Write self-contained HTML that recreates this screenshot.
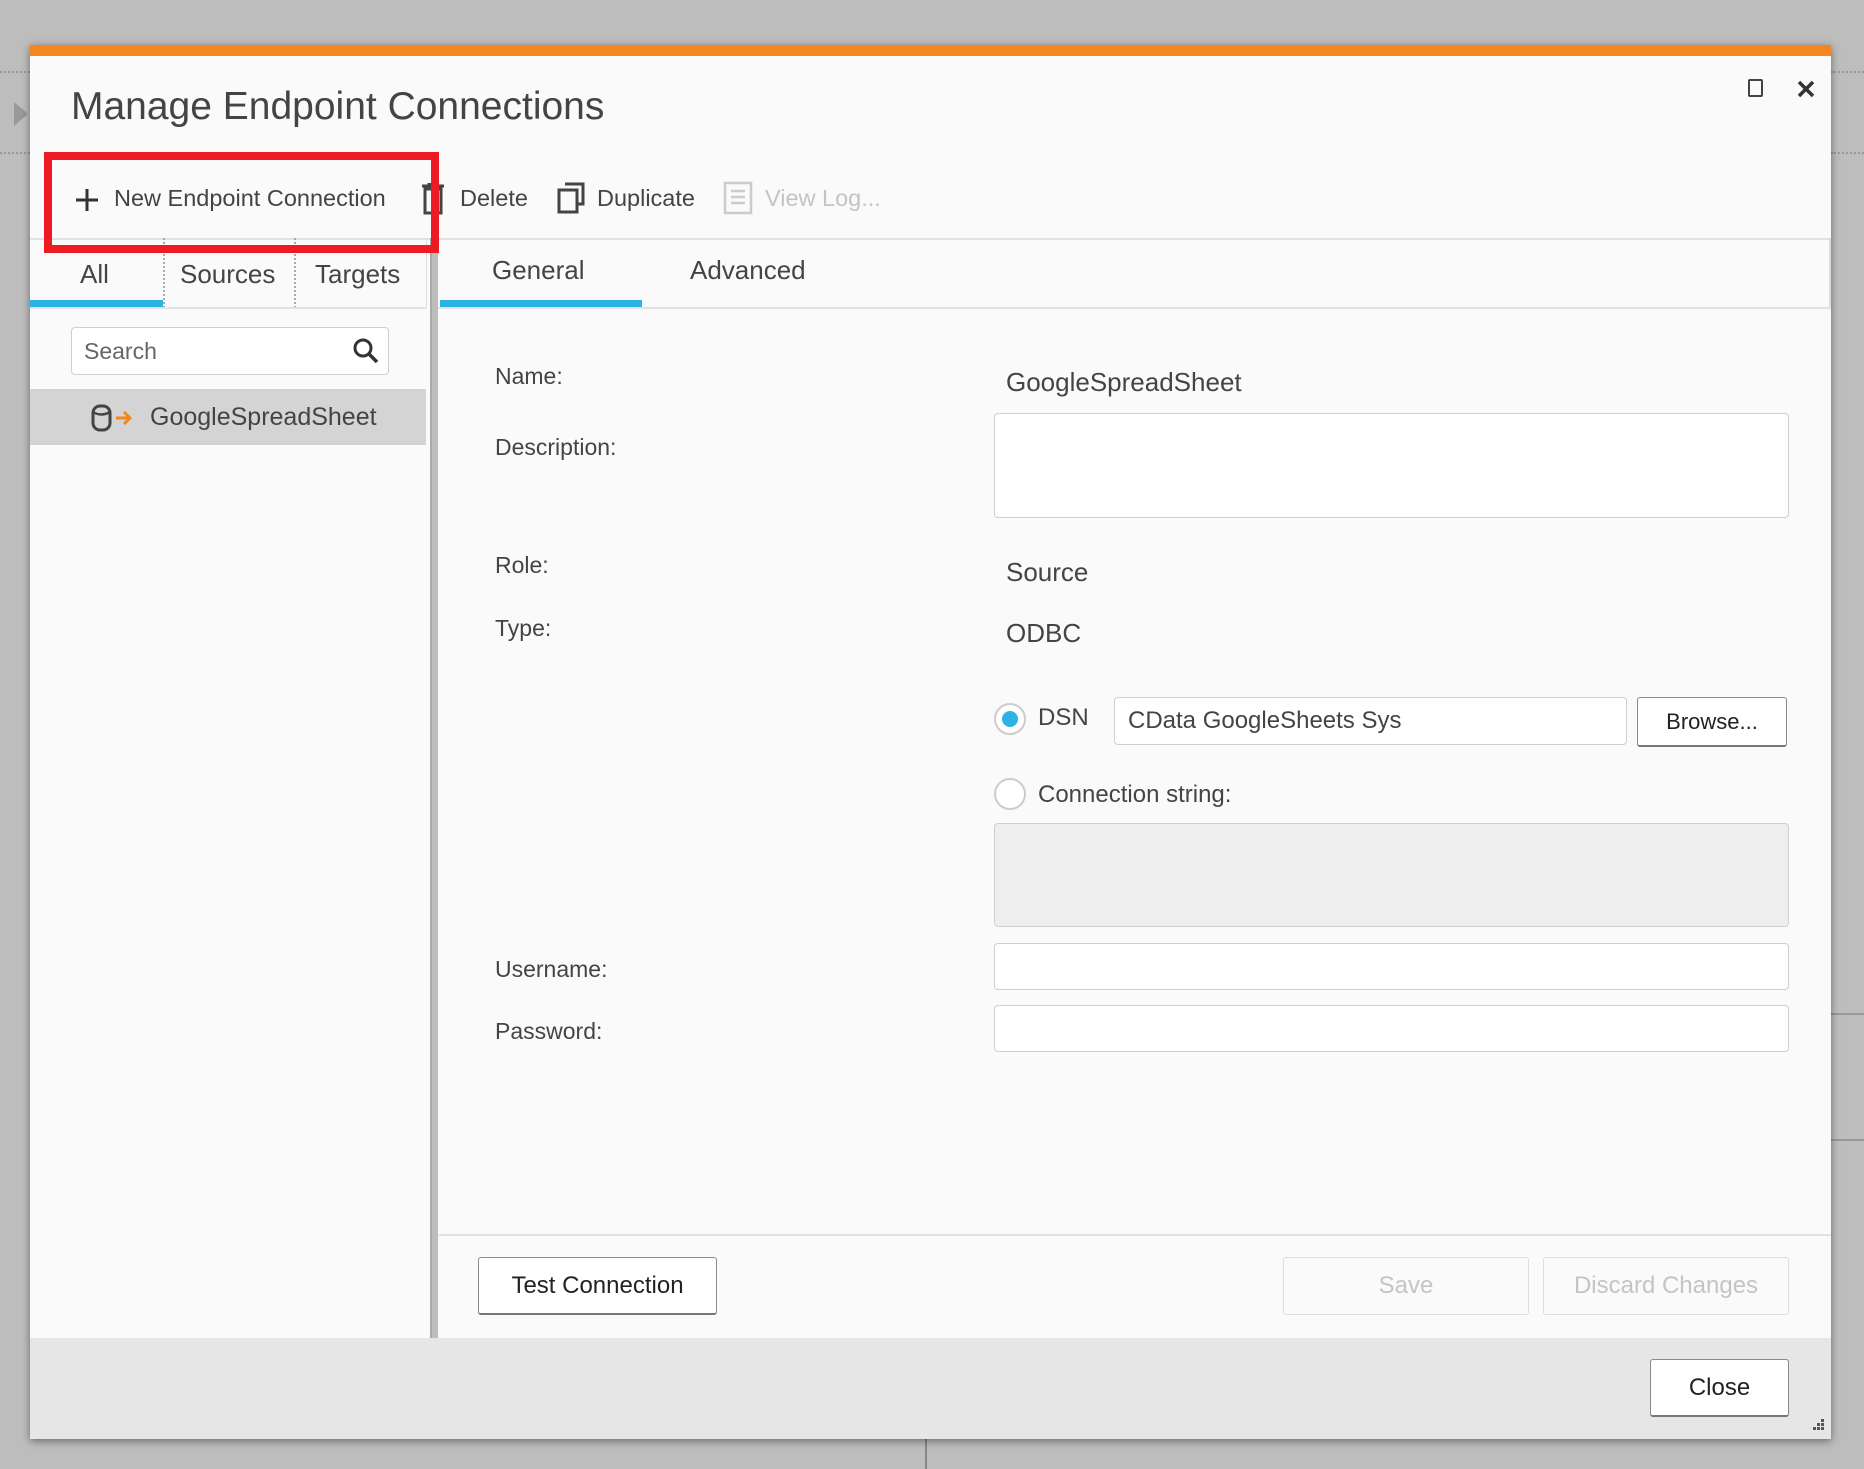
<!DOCTYPE html>
<html><head><meta charset="utf-8"><style>
*{box-sizing:border-box;margin:0;padding:0}
body{width:1864px;height:1464px;background:#bdbdbd;font-family:"Liberation Sans",sans-serif;color:#333;position:relative;overflow:hidden}
.a{position:absolute;white-space:nowrap}
.dlg{position:absolute;left:30px;top:45px;width:1801px;height:1394px;background:#fafafa;box-shadow:0 2px 8px rgba(0,0,0,.45)}
.inp{position:absolute;background:#fff;border:1px solid #cfcfcf;border-radius:4px}
.btn{position:absolute;background:#fff;border:1px solid #8a8a8a;border-bottom:2px solid #777;border-radius:3px;font-size:24px;display:flex;align-items:center;justify-content:center;color:#222}
.dis{border:1px solid #ddd;color:#c4c4c4;background:#fafafa}
.lbl{font-size:23px;color:#444}
.val{font-size:26px;color:#444}
</style></head><body>
<div class="a" style="left:0;top:71px;width:30px;border-top:2px dotted #999"></div>
<div class="a" style="left:0;top:152px;width:30px;border-top:2px dotted #999"></div>
<div class="a" style="left:14px;top:102px;width:0;height:0;border-top:12px solid transparent;border-bottom:12px solid transparent;border-left:14px solid #999"></div>
<div class="a" style="left:1831px;top:71px;width:40px;border-top:2px dotted #999"></div>
<div class="a" style="left:1831px;top:152px;width:40px;border-top:2px dotted #999"></div>
<div class="a" style="left:1831px;top:1013px;width:40px;border-top:2px solid #999"></div>
<div class="a" style="left:1831px;top:1139px;width:40px;border-top:2px solid #999"></div>
<div class="a" style="left:925px;top:1439px;height:30px;border-left:2px solid #888"></div>

<div class="dlg">
  <div class="a" style="left:0;top:0;width:1801px;height:11px;background:#f5861f"></div>
  <div class="a" style="left:41px;top:40px;font-size:39px;color:#444">Manage Endpoint Connections</div>
  <div class="a" style="left:1718px;top:34px;width:15px;height:18px;border:2px solid #444;border-radius:2px"></div>
  <svg class="a" style="left:1766px;top:34px" width="20" height="20"><path d="M3 3L17 17M17 3L3 17" stroke="#333" stroke-width="3.5"/></svg>

  <svg class="a" style="left:45px;top:143px" width="24" height="24"><path d="M12 1V23M1 12H23" stroke="#333" stroke-width="3"/></svg>
  <div class="a" style="left:84px;top:140px;font-size:23.5px;color:#444">New Endpoint Connection</div>
  <svg class="a" style="left:390px;top:138px" width="26" height="32"><path d="M2 3H24M9 3V1H17V3M5 6H21V30H5Z" stroke="#444" stroke-width="3" fill="none"/></svg>
  <div class="a" style="left:430px;top:140px;font-size:23.5px;color:#444">Delete</div>
  <svg class="a" style="left:526px;top:137px" width="30" height="32"><path d="M9 2H27V22H21M3 8H21V30H3Z" stroke="#444" stroke-width="3" fill="none"/></svg>
  <div class="a" style="left:567px;top:140px;font-size:23.5px;color:#444">Duplicate</div>
  <svg class="a" style="left:693px;top:136px" width="30" height="34"><path d="M2 2H28V32H2ZM8 10H22M8 16H22M8 22H22" stroke="#ccc" stroke-width="2.5" fill="none"/></svg>
  <div class="a" style="left:735px;top:140px;font-size:23.5px;color:#c4c4c4">View Log...</div>

  <div class="a" style="left:0;top:193px;width:1801px;border-top:2px solid #e2e2e2"></div>
  <div class="a" style="left:50px;top:214px;font-size:26px;color:#444">All</div>
  <div class="a" style="left:150px;top:214px;font-size:26px;color:#444">Sources</div>
  <div class="a" style="left:285px;top:214px;font-size:26px;color:#444">Targets</div>
  <div class="a" style="left:133px;top:193px;height:70px;border-left:2px dotted #aaa"></div>
  <div class="a" style="left:264px;top:193px;height:70px;border-left:2px dotted #aaa"></div>
  <div class="a" style="left:0;top:255px;width:133px;height:8px;background:#2cb2e4"></div>
  <div class="a" style="left:0;top:262px;width:396px;border-top:2px solid #e2e2e2"></div>
  <div class="a" style="left:396px;top:193px;height:70px;border-left:1px solid #ddd"></div>
  <div class="inp" style="left:41px;top:282px;width:318px;height:48px"></div>
  <div class="a" style="left:54px;top:293px;font-size:23px;color:#666">Search</div>
  <svg class="a" style="left:322px;top:292px" width="28" height="28"><circle cx="11" cy="11" r="8" stroke="#333" stroke-width="3" fill="none"/><path d="M17 17L25 25" stroke="#333" stroke-width="3.5"/></svg>
  <div class="a" style="left:0;top:344px;width:396px;height:56px;background:#d4d4d4"></div>
  <svg class="a" style="left:60px;top:358px" width="48" height="30"><rect x="3" y="3" width="17" height="24" rx="7" stroke="#444" stroke-width="3" fill="none"/><path d="M3 9Q11 14 20 9" stroke="#444" stroke-width="2.5" fill="none"/><path d="M26 15H40M34 9L40 15L34 21" stroke="#f5861f" stroke-width="3" fill="none"/></svg>
  <div class="a" style="left:120px;top:358px;font-size:25px;color:#444">GoogleSpreadSheet</div>
  <div class="a" style="left:400px;top:193px;width:8px;height:1139px;background:#bdbdbd;border-left:2px solid #aaa"></div>

  <div class="a" style="left:462px;top:210px;font-size:26px;color:#444">General</div>
  <div class="a" style="left:660px;top:210px;font-size:26px;color:#444">Advanced</div>
  <div class="a" style="left:410px;top:255px;width:202px;height:8px;background:#2cb2e4"></div>
  <div class="a" style="left:408px;top:262px;width:1393px;border-top:2px solid #e2e2e2"></div>
  <div class="a" style="left:1799px;top:193px;height:70px;border-left:2px solid #ddd"></div>

  <div class="a lbl" style="left:465px;top:318px">Name:</div>
  <div class="a lbl" style="left:465px;top:389px">Description:</div>
  <div class="a lbl" style="left:465px;top:507px">Role:</div>
  <div class="a lbl" style="left:465px;top:570px">Type:</div>
  <div class="a lbl" style="left:465px;top:911px">Username:</div>
  <div class="a lbl" style="left:465px;top:973px">Password:</div>
  <div class="a val" style="left:976px;top:322px">GoogleSpreadSheet</div>
  <div class="a val" style="left:976px;top:512px">Source</div>
  <div class="a val" style="left:976px;top:573px">ODBC</div>
  <div class="inp" style="left:964px;top:368px;width:795px;height:105px"></div>
  <div class="a" style="left:964px;top:658px;width:32px;height:32px;border:2px solid #ccc;border-radius:50%;background:#fff"></div>
  <div class="a" style="left:972px;top:666px;width:16px;height:16px;border-radius:50%;background:#2cb2e4"></div>
  <div class="a val" style="left:1008px;top:659px;font-size:24px">DSN</div>
  <div class="inp" style="left:1084px;top:652px;width:513px;height:48px"></div>
  <div class="a val" style="left:1098px;top:662px;font-size:24px;color:#444">CData GoogleSheets Sys</div>
  <div class="btn" style="left:1607px;top:652px;width:150px;height:50px;font-size:22px">Browse...</div>
  <div class="a" style="left:964px;top:733px;width:32px;height:32px;border:2px solid #ccc;border-radius:50%;background:#fff"></div>
  <div class="a val" style="left:1008px;top:736px;font-size:24px">Connection string:</div>
  <div class="inp" style="left:964px;top:778px;width:795px;height:104px;background:#eee"></div>
  <div class="inp" style="left:964px;top:898px;width:795px;height:47px"></div>
  <div class="inp" style="left:964px;top:960px;width:795px;height:47px"></div>

  <div class="a" style="left:409px;top:1189px;width:1392px;border-top:2px solid #e2e2e2"></div>
  <div class="btn" style="left:448px;top:1212px;width:239px;height:58px">Test Connection</div>
  <div class="btn dis" style="left:1253px;top:1212px;width:246px;height:58px">Save</div>
  <div class="btn dis" style="left:1513px;top:1212px;width:246px;height:58px">Discard Changes</div>

  <div class="a" style="left:0;top:1293px;width:1801px;height:101px;background:#e6e6e6"></div>
  <div class="btn" style="left:1620px;top:1314px;width:139px;height:58px">Close</div>
  <svg class="a" style="left:1780px;top:1372px" width="16" height="16"><g fill="#555"><rect x="11" y="2" width="3" height="3"/><rect x="7" y="6" width="3" height="3"/><rect x="11" y="6" width="3" height="3"/><rect x="3" y="10" width="3" height="3"/><rect x="7" y="10" width="3" height="3"/><rect x="11" y="10" width="3" height="3"/></g></svg>
</div>
<div class="a" style="left:44px;top:152px;width:395px;height:101px;border:8px solid #ed1c24"></div>
</body></html>
